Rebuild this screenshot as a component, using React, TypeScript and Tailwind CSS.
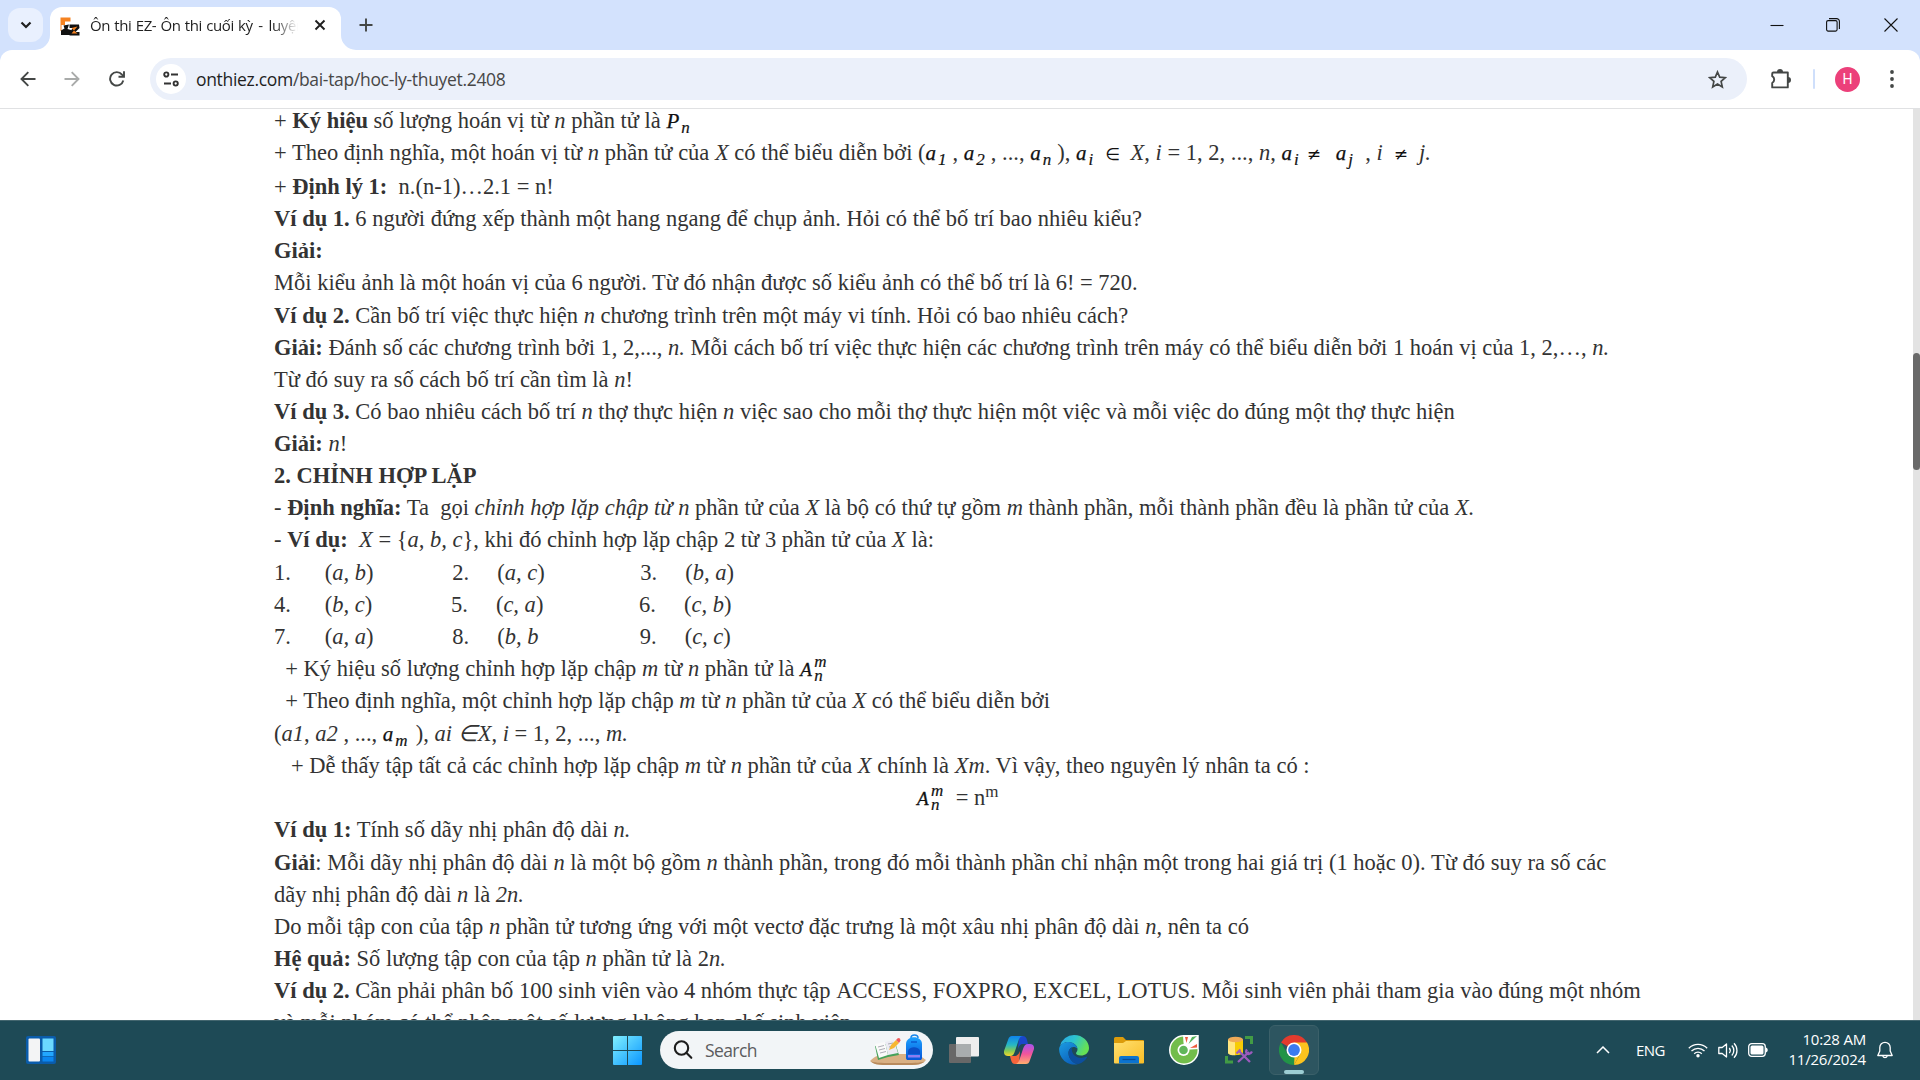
import React from "react";

const UI = "font-['Open_Sans','Noto_Sans',sans-serif]";

function Line({ h = "h-8", className = "", children }: { h?: string; className?: string; children: React.ReactNode }) {
  return <div className={`${h} whitespace-pre leading-8 ${className}`}>{children}</div>;
}

function Sym({ base, sub, w }: { base: string; sub: string; w: string }) {
  return (
    <span className={`${w} inline-block h-5 align-baseline text-[21px] leading-5 italic text-[#111] [-webkit-text-stroke:0.25px_#111]`}>
      {base}
      <span className="relative top-[5px] ml-[2px] text-[17px] [-webkit-text-stroke:0.2px_#111]">{sub}</span>
    </span>
  );
}

function Anm({ w }: { w: string }) {
  return (
    <span className={`${w} relative inline-block h-5 text-[19px] leading-5 italic text-[#111] [-webkit-text-stroke:0.3px_#111]`}>
      A
      <span className="absolute top-[-6px] left-[14px] text-[17px] leading-4 [-webkit-text-stroke:0.2px_#111]">m</span>
      <span className="absolute top-[8px] left-[14px] text-[17px] leading-4 [-webkit-text-stroke:0.2px_#111]">n</span>
    </span>
  );
}

function Op({ c, w }: { c: string; w: string }) {
  return <span className={`${w} inline-block text-center font-['DejaVu_Sans',sans-serif] text-[17px] leading-5 not-italic text-[#111]`}>{c}</span>;
}

function Article() {
  return (
    <main className="flex-1 overflow-hidden bg-white">
      <article className="-mt-[4px] ml-[274px] w-[1372px] font-['Liberation_Serif','Times_New_Roman',serif] text-[22.5px] text-[#333333]">
        <Line>+ <b>Ký hiệu</b> số lượng hoán vị từ <i>n</i> phần tử là <Sym base="P" sub="n" w="w-[24px]" /></Line>
        <Line h="h-[34px]">+ Theo định nghĩa, một hoán vị từ <i>n</i> phần tử của <i>X</i> có thể biểu diễn bởi (<Sym base="a" sub="1" w="w-[27px]" />, <Sym base="a" sub="2" w="w-[27px]" />, ..., <Sym base="a" sub="n" w="w-[27px]" />), <Sym base="a" sub="i" w="w-[25px]" /><Op c="∈" w="w-[24px]" /> <i>X</i>, <i>i</i> = 1, 2, ..., <i>n</i>, <Sym base="a" sub="i" w="w-[22px]" /><Op c="≠" w="w-[21px]" />  <Sym base="a" sub="j" w="w-[24px]" /> , <i>i</i> <Op c="≠" w="w-[25px]" /> <i>j.</i></Line>
        <Line>+ <b>Định lý 1:</b>  n.(n-1)…2.1 = n!</Line>
        <Line><b>Ví dụ 1.</b> 6 người đứng xếp thành một hang ngang để chụp ảnh. Hỏi có thể bố trí bao nhiêu kiểu?</Line>
        <Line><b>Giải:</b></Line>
        <Line h="h-[33px]">Mỗi kiểu ảnh là một hoán vị của 6 người. Từ đó nhận được số kiểu ảnh có thể bố trí là 6! = 720.</Line>
        <Line><b>Ví dụ 2.</b> Cần bố trí việc thực hiện <i>n</i> chương trình trên một máy vi tính. Hỏi có bao nhiêu cách?</Line>
        <Line><b>Giải:</b> Đánh số các chương trình bởi 1, 2,..., <i>n.</i> Mỗi cách bố trí việc thực hiện các chương trình trên máy có thể biểu diễn bởi 1 hoán vị của 1, 2,…, <i>n.</i></Line>
        <Line>Từ đó suy ra số cách bố trí cần tìm là <i>n</i>!</Line>
        <Line><b>Ví dụ 3.</b> Có bao nhiêu cách bố trí <i>n</i> thợ thực hiện <i>n</i> việc sao cho mỗi thợ thực hiện một việc và mỗi việc do đúng một thợ thực hiện</Line>
        <Line><b>Giải:</b> <i>n</i>!</Line>
        <Line><b>2. CHỈNH HỢP LẶP</b></Line>
        <Line>- <b>Định nghĩa:</b> Ta  gọi <i>chỉnh hợp lặp chập từ n</i> phần tử của <i>X</i> là bộ có thứ tự gồm <i>m</i> thành phần, mỗi thành phần đều là phần tử của <i>X.</i></Line>
        <Line h="h-[33px]">- <b>Ví dụ:</b>  <i>X</i> = {"{"}<i>a, b, c</i>{"}"}, khi đó chỉnh hợp lặp chập 2 từ 3 phần tử của <i>X</i> là:</Line>
        <Line>{"1.      "}(<i>a, b</i>){"              2.    "} (<i>a, c</i>){"                 3.    "} (<i>b, a</i>)</Line>
        <Line>{"4.      "}(<i>b, c</i>){"              5.    "} (<i>c, a</i>){"                 6.    "} (<i>c, b</i>)</Line>
        <Line>{"7.      "}(<i>a, a</i>){"              8.    "} (<i>b, b</i>{"                  9.    "} (<i>c, c</i>)</Line>
        <Line>{"  "}+ Ký hiệu số lượng chỉnh hợp lặp chập <i>m</i> từ <i>n</i> phần tử là <Anm w="w-[27px]" /></Line>
        <Line h="h-[33px]">{"  "}+ Theo định nghĩa, một chỉnh hợp lặp chập <i>m</i> từ <i>n</i> phần tử của <i>X</i> có thể biểu diễn bởi</Line>
        <Line>(<i>a1</i>, <i>a2</i> , ..., <Sym base="a" sub="m" w="w-[33px]" />), <i>ai ∈X</i>, <i>i</i> = 1, 2, ..., <i>m.</i></Line>
        <Line>{"   "}+ Dễ thấy tập tất cả các chỉnh hợp lặp chập <i>m</i> từ <i>n</i> phần tử của <i>X</i> chính là <i>Xm</i>. Vì vậy, theo nguyên lý nhân ta có :</Line>
        <Line className="pl-[643px]"><Anm w="w-[33px]" /> = n<sup className="relative top-[-8px] text-[17px]">m</sup></Line>
        <Line h="h-[33px]"><b>Ví dụ 1:</b> Tính số dãy nhị phân độ dài <i>n.</i></Line>
        <Line><b>Giải</b>: Mỗi dãy nhị phân độ dài <i>n</i> là một bộ gồm <i>n</i> thành phần, trong đó mỗi thành phần chỉ nhận một trong hai giá trị (1 hoặc 0). Từ đó suy ra số các</Line>
        <Line>dãy nhị phân độ dài <i>n</i> là <i>2n.</i></Line>
        <Line>Do mỗi tập con của tập <i>n</i> phần tử tương ứng với một vectơ đặc trưng là một xâu nhị phân độ dài <i>n</i>, nên ta có</Line>
        <Line><b>Hệ quả:</b> Số lượng tập con của tập <i>n</i> phần tử là 2<i>n.</i></Line>
        <Line><b>Ví dụ 2.</b> Cần phải phân bố 100 sinh viên vào 4 nhóm thực tập <span className="tracking-[0.05px]">ACCESS, FOXPRO, EXCEL, LOTUS. </span>Mỗi sinh viên phải tham gia vào đúng một nhóm</Line>
        <Line>và mỗi nhóm có thể nhận một số lượng không hạn chế sinh viên.</Line>
      </article>
    </main>
  );
}

function Favicon() {
  return (
    <svg className="h-[19px] w-5" viewBox="0 0 20 19">
      <path d="M.5.5h10v4H5v3.500H1.500V14H.5z" fill="#f58220" />
      <path d="M3.500 8.500L9 7.500 7.500 12l3.500 1v5H1v-4.500l3.500-2z" fill="#111" />
      <path d="M9.500 7.500H19L19.500 11l-4 4h4v3.500H9.500l.5-4L13 11H9.500z" fill="#111" />
      <path d="M11.500 11l6-1.500-3.500 4 3.500 3h-6l2.500-3z" fill="#f58220" />
    </svg>
  );
}

function TabStrip() {
  return (
    <header className={`${UI} flex h-[50px] items-start bg-[#d3e2fd]`}>
      <button className="mt-2 ml-2 flex h-[34px] w-[35px] items-center justify-center rounded-xl bg-[#e9f0fe]">
        <svg className="h-2 w-3" viewBox="0 0 12 8" fill="none" stroke="#1f1f1f" strokeWidth="2.200"><path d="M1.500 1.500L6 6l4.500-4.500" /></svg>
      </button>
      <div className="relative mt-[7px] ml-[7px] flex h-[43px] w-[291px] items-center rounded-t-xl bg-white pl-2.5">
        <svg className="absolute bottom-0 -left-[15px] h-[15px] w-[15px]" viewBox="0 0 15 15"><path d="M15 0v15H0A15 15 0 0 0 15 0z" fill="#fff" /></svg>
        <svg className="absolute -right-[15px] bottom-0 h-[15px] w-[15px]" viewBox="0 0 15 15"><path d="M0 0v15h15A15 15 0 0 1 0 0z" fill="#fff" /></svg>
        <div className="-mt-1"><Favicon /></div>
        <div className="-mt-[7px] ml-2.5 w-[208px] overflow-hidden [mask-image:linear-gradient(90deg,#000_88%,transparent)] text-[15px] tracking-[-0.36px] [word-spacing:0.6px] whitespace-nowrap text-[#1f1f1f]">Ôn thi EZ- Ôn thi cuối kỳ<span className="mx-[1.5px]"> - </span>luyện thi</div>
        <svg className="-mt-[7px] ml-4 h-3 w-3" viewBox="0 0 12 12" fill="none" stroke="#1f1f1f" strokeWidth="1.900"><path d="M1.500 1.500l9 9M10.500 1.500l-9 9" /></svg>
      </div>
      <svg className="mt-[18px] ml-[17.500px] h-[14px] w-[14px]" viewBox="0 0 14 14" fill="none" stroke="#444746" strokeWidth="1.900"><path d="M7 .5v13M.5 7h13" /></svg>
      <div className="ml-auto flex h-[50px] items-center">
        <svg className="mr-[42px] h-3.5 w-3.5" viewBox="0 0 14 14"><path d="M.5 7.500h13" stroke="#111" strokeWidth="1.100" /></svg>
        <svg className="mr-[44px] h-[14px] w-[14px]" viewBox="0 0 14 14" fill="none" stroke="#111" strokeWidth="1.100"><rect x=".6" y="2.600" width="10.500" height="10.500" rx="1.500" /><path d="M3 .6h7.500a2.800 2.800 0 0 1 2.900 2.900V11" /></svg>
        <svg className="mr-[22px] h-[14px] w-[14px]" viewBox="0 0 14 14" fill="none" stroke="#111" strokeWidth="1.100"><path d="M.5.5l13 13M13.500.5l-13 13" /></svg>
      </div>
    </header>
  );
}

function Toolbar() {
  return (
    <div className="h-[59px] bg-[#d3e2fd]">
      <div className={`${UI} flex h-[59px] items-center rounded-t-[12px] border-b border-[#e0e1e3] bg-white`}>
        <svg className="ml-5 h-4 w-4" viewBox="0 0 16 16" fill="none" stroke="#444746" strokeWidth="1.900"><path d="M15.500 8H1.800M8.300 1.200L1.500 8l6.800 6.800" /></svg>
        <svg className="ml-[28px] h-4 w-4" viewBox="0 0 16 16" fill="none" stroke="#a9abaa" strokeWidth="1.900"><path d="M.5 8h13.700M7.700 1.200L14.500 8l-6.800 6.800" /></svg>
        <svg className="ml-[29px] h-4 w-4" viewBox="0 0 16 16" fill="none" stroke="#444746" strokeWidth="1.900"><path d="M14.300 9.500A6.700 6.700 0 1 1 13 3.600L14.500 5.200" /><path d="M15 .3v5.500H9.500" /></svg>
        <div className="ml-[25px] flex h-[42px] w-[1597px] items-center rounded-full bg-[#ebf0fa] pl-1.5">
          <div className="flex h-[30px] w-[30px] items-center justify-center rounded-full bg-white">
            <svg className="h-4 w-4" viewBox="0 0 16 16" fill="none" stroke="#333" strokeWidth="1.900"><circle cx="3.300" cy="3.500" r="2.100" /><path d="M8 3.500h7M1 12.500h7" /><circle cx="12.700" cy="12.500" r="2.100" /></svg>
          </div>
          <div className="ml-[10px] text-[17.5px] tracking-[-0.32px] text-[#474747]"><span className="text-[#1f1f1f]">onthiez.com</span>/bai-tap/hoc-ly-thuyet.2408</div>
          <svg className="mr-5 ml-auto h-[19px] w-[19px]" viewBox="0 0 19 19" fill="none" stroke="#444746" strokeWidth="1.700"><path d="M9.500 2l2.200 5.200 5.600.5-4.200 3.700 1.200 5.500-4.800-2.900-4.800 2.900 1.200-5.500L1.700 7.700l5.600-.5z" /></svg>
        </div>
        <svg className="ml-[23px] h-[22px] w-[22px]" viewBox="0 0 22 22"><path d="M3.500 4.500h14.300v14.900H2.200V15a3.900 3.900 0 0 0 0-6.800V5.800a1.300 1.300 0 0 1 1.300-1.300z" fill="none" stroke="#444746" strokeWidth="1.900" strokeLinejoin="round" /><path d="M7 4a3 3 0 0 1 6 0zM18 9a3 3 0 0 1 0 6z" fill="#444746" /></svg>
        <div className="ml-[21px] h-5 w-0.5 rounded bg-[#cfdffb]" />
        <div className="ml-5 flex h-[25px] w-[25px] items-center justify-center rounded-full bg-[#ec407a] font-['Roboto',sans-serif] text-[14px] text-white">H</div>
        <svg className="ml-[30px] h-5 w-1" viewBox="0 0 4 20" fill="#444746"><circle cx="2" cy="3" r="1.900" /><circle cx="2" cy="10" r="1.900" /><circle cx="2" cy="17" r="1.900" /></svg>
      </div>
    </div>
  );
}

function Slot({ active = false, children }: { active?: boolean; children: React.ReactNode }) {
  return (
    <div className={active ? "relative flex h-[50px] w-[50px] items-center justify-center rounded-md border border-[#3b6069] bg-[#2d5560]" : "flex h-[50px] w-[50px] items-center justify-center"}>
      {children}
      {active && <div className="absolute bottom-0 h-1 w-5 rounded-full bg-[#9ccdd3]" />}
    </div>
  );
}

function Taskbar() {
  return (
    <footer className={`${UI} flex h-[60px] items-center border-t border-[#43666f] bg-[#1e4a56] pb-px text-white`}>
      <svg className="ml-[26px] h-[28px] w-[30px]" viewBox="0 0 30 28">
        <rect width="30" height="28" rx="2" fill="#0a5cab" /><rect x="2.500" y="2.500" width="11.500" height="23" rx="1" fill="#f3f4f5" />
        <path d="M16.500 2.500h11v12.500h-11z" fill="#6bd9ff" /><path d="M16.500 16h11v4.200h-11z" fill="#22a7ff" /><path d="M16.500 21h11v4.500h-11z" fill="#0b86ef" />
      </svg>
      <svg className="ml-[557px] h-[29px] w-[29px]" viewBox="0 0 29 29">
        <defs><linearGradient id="win" gradientUnits="userSpaceOnUse" x1="0" y1="0" x2="29" y2="29"><stop stopColor="#80f0ff" /><stop offset="1" stopColor="#0a96ff" /></linearGradient></defs>
        <path d="M1 0h13v14H0V1a1 1 0 0 1 1-1zM15 0h13a1 1 0 0 1 1 1v13H15zM0 15h14v14H1a1 1 0 0 1-1-1zM15 15h14v13a1 1 0 0 1-1 1H15z" fill="url(#win)" />
      </svg>
      <div className="ml-[18px] flex h-[38px] w-[273px] items-center rounded-full bg-[#f2f5f7]">
        <svg className="ml-[13px] h-5 w-5" viewBox="0 0 20 20" fill="none" stroke="#1d1d1d" strokeWidth="2.100" strokeLinecap="round"><circle cx="8.500" cy="8" r="6.700" /><path d="M13.300 12.800l5 5" /></svg>
        <span className="ml-[12px] text-[17.5px] tracking-[-0.6px] text-[#5b5c5e]">Search</span>
        <svg className="mr-[6px] ml-auto h-[32px] w-[58px]" viewBox="0 0 58 32">
          <defs>
            <linearGradient id="bag" x1="0" y1="0" x2="0" y2="1"><stop stopColor="#1ca2ff" /><stop offset="1" stopColor="#0655d8" /></linearGradient>
          </defs>
          <path d="M1 27c5-5 10-7 18-7h22c8 0 12 3 16 6-3 4-8 5-14 5H17C9 31 4 30 1 27z" fill="#d9b083" /><path d="M2 27.500c5 1.500 12 1.500 27 1.500S51 29 56 27.500c-3 2.500-8 3.500-13 3.500H17C9 31 4 30 2 27.500z" fill="#b98a5c" />
          <path d="M6 12l11-2 9-2 4 13-11 2-10 3z" fill="#46a25a" /><path d="M6 10l10-2 3 13-9 3z" fill="#fafafa" /><path d="M16 8l9-2 4 13-10 2z" fill="#ecebf3" />
          <path d="M9 13l6-1.500M10 16l6-1.500M11 19l6-1.500M19 10l5-1M20 13l5-1" stroke="#a4a4ae" strokeWidth=".9" />
          <path d="M20 16l2-5 5-5 3 3-5 5z" fill="#f7b731" /><path d="M27 6l2-2 2 .5.500 2L30 9z" fill="#ef5b5b" />
          <path d="M42 4c0-4 7-4 7 0" fill="none" stroke="#1685ea" strokeWidth="1.500" /><path d="M37 10c0-9 16-9 16 0v14c0 1.500-1 2-2 2H39c-1 0-2-.5-2-2z" fill="url(#bag)" /><path d="M39 17c1-5 11-5 12 0v3H39z" fill="#0a4fc7" /><path d="M39 21h12v2.500H39z" fill="#8c7cf0" /><path d="M42 8h6" stroke="#0a4fc7" strokeWidth="1.300" />
        </svg>
      </div>
      <div className="ml-1.5 flex gap-[5px]">
        <Slot>
          <svg className="h-7 w-[30px]" viewBox="0 0 30 28"><rect y="8" width="22" height="19" rx="1" fill="#686868" /><rect x="7" y="1" width="23" height="19.500" rx="1" fill="#eeeeee" /><path d="M7 8h15v12.500H8a1 1 0 0 1-1-1z" fill="#a9adae" /></svg>
        </Slot>
        <Slot>
          <svg className="h-7 w-[30px]" viewBox="0 0 30 28">
            <defs>
              <linearGradient id="cp1" x1="0" y1="0" x2="0" y2="1"><stop stopColor="#0e83ee" /><stop offset=".45" stopColor="#27b8c4" /><stop offset=".75" stopColor="#8acb50" /><stop offset="1" stopColor="#f6d72c" /></linearGradient>
              <linearGradient id="cp2" x1="0" y1="0" x2="0" y2="1"><stop stopColor="#a553ef" /><stop offset=".5" stopColor="#f2559b" /><stop offset="1" stopColor="#ffae6e" /></linearGradient>
            </defs>
            <path d="M15 0h4c2 0 3 1 4 4l1 4h-5c-3 0-4 2-5 5z" fill="#1a47c9" />
            <path d="M15 28h-4c-2 0-3-1-4-4l-1-4h4c3 0 5-2 6-5z" fill="#f5643b" />
            <path d="M8 0h11c-3 0-4 3-5 6l-3 9c-1 3-2 5-5 5H4c-3 0-4.500-2-4-5L4 4c1-3 2-4 4-4z" fill="url(#cp1)" />
            <path d="M22 28H11c3 0 4-3 5-6l3-9c1-3 2-5 5-5h2c3 0 4.500 2 4 5l-4 11c-1 3-2 4-4 4z" fill="url(#cp2)" />
          </svg>
        </Slot>
        <Slot>
          <svg className="h-[30px] w-[30px]" viewBox="0 0 30 30">
            <defs>
              <linearGradient id="ed1" x1="0" y1="0" x2="1" y2=".4"><stop stopColor="#2aa5e9" /><stop offset=".5" stopColor="#2cc3cf" /><stop offset="1" stopColor="#66e254" /></linearGradient>
              <linearGradient id="ed2" x1="0" y1="0" x2=".6" y2="1"><stop stopColor="#1b9de2" /><stop offset="1" stopColor="#0c61bd" /></linearGradient>
            </defs>
            <path d="M1 11A14.500 14.500 0 0 1 15 0c9 0 15 6.500 15 13 0 5-4 7.500-8 7.500-3.500 0-5-1.300-5-2.300s1.500-1.700 1.500-4C18.500 11 15 7 9.500 7 5.500 7 2.500 9 1 11z" fill="url(#ed1)" />
            <path d="M.2 13C1.500 9 5 7 9.500 7c5.500 0 8.800 4 9 7-1-1.500-2.500-2-4-2-3 0-5 3-5 6 0 6 5 10.500 9.500 11A15 15 0 0 1 .2 13z" fill="url(#ed2)" />
            <path d="M12.800 12.500c-2 1-3.300 3.200-3.300 5.500 0 6 5 11 10 11 4-1 7-4 8.500-6.500.3-.6-.2-.9-.8-.7C20 25 12 21 12.800 12.500z" fill="#0d4f9e" />
          </svg>
        </Slot>
        <Slot>
          <svg className="h-7 w-[30px]" viewBox="0 0 30 28">
            <defs><linearGradient id="fo" x1="0" y1="0" x2="1" y2="1"><stop stopColor="#ffe070" /><stop offset="1" stopColor="#f9bd26" /></linearGradient></defs>
            <path d="M0 2.500A1.500 1.500 0 0 1 1.500 1H9l3 3h17a1 1 0 0 1 1 1v8H0z" fill="#dc9c0b" /><path d="M0 7h9l3-2h18v21.500a1 1 0 0 1-1 1H1a1 1 0 0 1-1-1z" fill="url(#fo)" />
            <path d="M5 27.500V22a2 2 0 0 1 2-2h16a2 2 0 0 1 2 2v5.500z" fill="#0c74cf" /><path d="M8.500 23.500h13" stroke="#0a4c96" strokeWidth="1.200" />
          </svg>
        </Slot>
        <Slot>
          <svg className="h-[30px] w-[30px]" viewBox="0 0 30 30">
            <path d="M15 0h14.500v13.500l.5 1.500A15 15 0 1 1 15 0z" fill="#fff" /><circle cx="15" cy="15" r="13.500" fill="#72bd4b" />
            <path d="M14 0h15.500v14L15 15z" fill="#fff" /><circle cx="14.500" cy="15" r="6" fill="#fff" /><circle cx="14.500" cy="15" r="4.300" fill="#60b65a" />
            <path d="M16 2h3l-1.500 6z" fill="#ef5b3f" /><path d="M28 1l-8.500 8L23 2z" fill="#56b45c" /><path d="M28 9v3.500l-7 .5z" fill="#ef5b3f" />
          </svg>
        </Slot>
        <Slot>
          <svg className="h-7 w-7" viewBox="0 0 28 28">
            <path d="M20 1.500h6.500V8M1.500 20v6H8" fill="none" stroke="#429b45" strokeWidth="3" /><path d="M3 3.500v13c0 3.500 15 3.500 15 0v-13z" fill="#f7cc05" /><path d="M3 3.500v13c0 2 3 2.800 7 2.800V3.500z" fill="#ffe680" /><ellipse cx="10.500" cy="3.500" rx="7.500" ry="2.800" fill="#eeaa58" />
            <path d="M13 26l11-10M11.500 17.500l4-4M14 15l11 11M22 13.500c-1.500 2-1 4 1 4.500s3-.5 4-2.500" fill="none" stroke="#9c5bbd" strokeWidth="2.300" />
          </svg>
        </Slot>
        <Slot active>
          <svg className="h-[30px] w-[30px]" viewBox="0 0 30 30">
            <path d="M15 15L2 7.500A15 15 0 0 1 28 7.500z" fill="#e33b2e" /><path d="M15 7.500h13A15 15 0 0 1 15 30l6.500-11.500z" fill="#fcc31e" /><path d="M2 7.500l6.500 11.200c1.500 2.600 5 3.900 8 3.500L15 30A15 15 0 0 1 2 7.500z" fill="#229447" />
            <path d="M15 30l6.500-11.500-6 3.500z" fill="#fcc31e" /><circle cx="15" cy="15" r="7.500" fill="#fff" /><circle cx="15" cy="15" r="5.900" fill="#3a7af0" />
          </svg>
        </Slot>
      </div>
      <div className="ml-auto flex items-center">
        <svg className="h-2 w-[14px]" viewBox="0 0 14 8" fill="none" stroke="#fff" strokeWidth="1.500"><path d="M1 7l6-6 6 6" /></svg>
        <span className="ml-[26px] w-[30px] text-[15px] tracking-[-0.6px]">ENG</span>
        <svg className="ml-[22px] h-4 w-5" viewBox="0 0 20 16" fill="none" stroke="#fff" strokeWidth="1.300"><path d="M.8 6.200a13 13 0 0 1 18.400 0M3.500 9a9.200 9.200 0 0 1 13 0M6.200 11.700a5.400 5.400 0 0 1 7.600 0" /><circle cx="10" cy="13.800" r="1.700" fill="#fff" stroke="none" /></svg>
        <svg className="ml-[10px] h-[17px] w-5" viewBox="0 0 20 17" fill="none" stroke="#fff" strokeWidth="1.300" strokeLinejoin="round"><path d="M.8 5.500h3.400L8.500 2v13l-4.300-3.500H.8z" /><path d="M11.300 6a4 4 0 0 1 0 5M13.800 3.500a7.200 7.200 0 0 1 0 10M16 1.200a10.500 10.500 0 0 1 0 14.600" /></svg>
        <svg className="ml-[10px] h-[14px] w-5" viewBox="0 0 20 14"><rect x=".7" y=".7" width="16.600" height="12.600" rx="3" fill="none" stroke="#fff" strokeWidth="1.300" /><rect x="2.500" y="2.500" width="13" height="9" rx="1.500" fill="#fff" /><path d="M18 4.500c2.300.8 2.300 4.200 0 5z" fill="#fff" /></svg>
        <div className="mb-[3px] ml-[18px] w-[80px] text-right text-[15px] leading-5 tracking-[-0.2px] whitespace-nowrap">10:28 AM<br />11/26/2024</div>
        <svg className="mr-[27px] ml-[11px] h-[19px] w-4" viewBox="0 0 16 19" fill="none" stroke="#fff" strokeWidth="1.300" strokeLinejoin="round"><path d="M2.800 10V6.500a5.200 5.200 0 0 1 10.400 0V10l2 4.500H.8z" /><path d="M5.800 15a2.300 2.300 0 0 0 4.400 0" /></svg>
      </div>
    </footer>
  );
}

export default function App() {
  return (
    <div className="flex h-[1080px] w-[1920px] flex-col overflow-hidden">
      <TabStrip />
      <Toolbar />
      <div className="flex h-[911px]">
        <Article />
        <div className="w-[7px] bg-[#e3e3e3] pt-[244px]">
          <div className="h-[117px] rounded-full bg-[#696969]" />
        </div>
      </div>
      <Taskbar />
    </div>
  );
}
